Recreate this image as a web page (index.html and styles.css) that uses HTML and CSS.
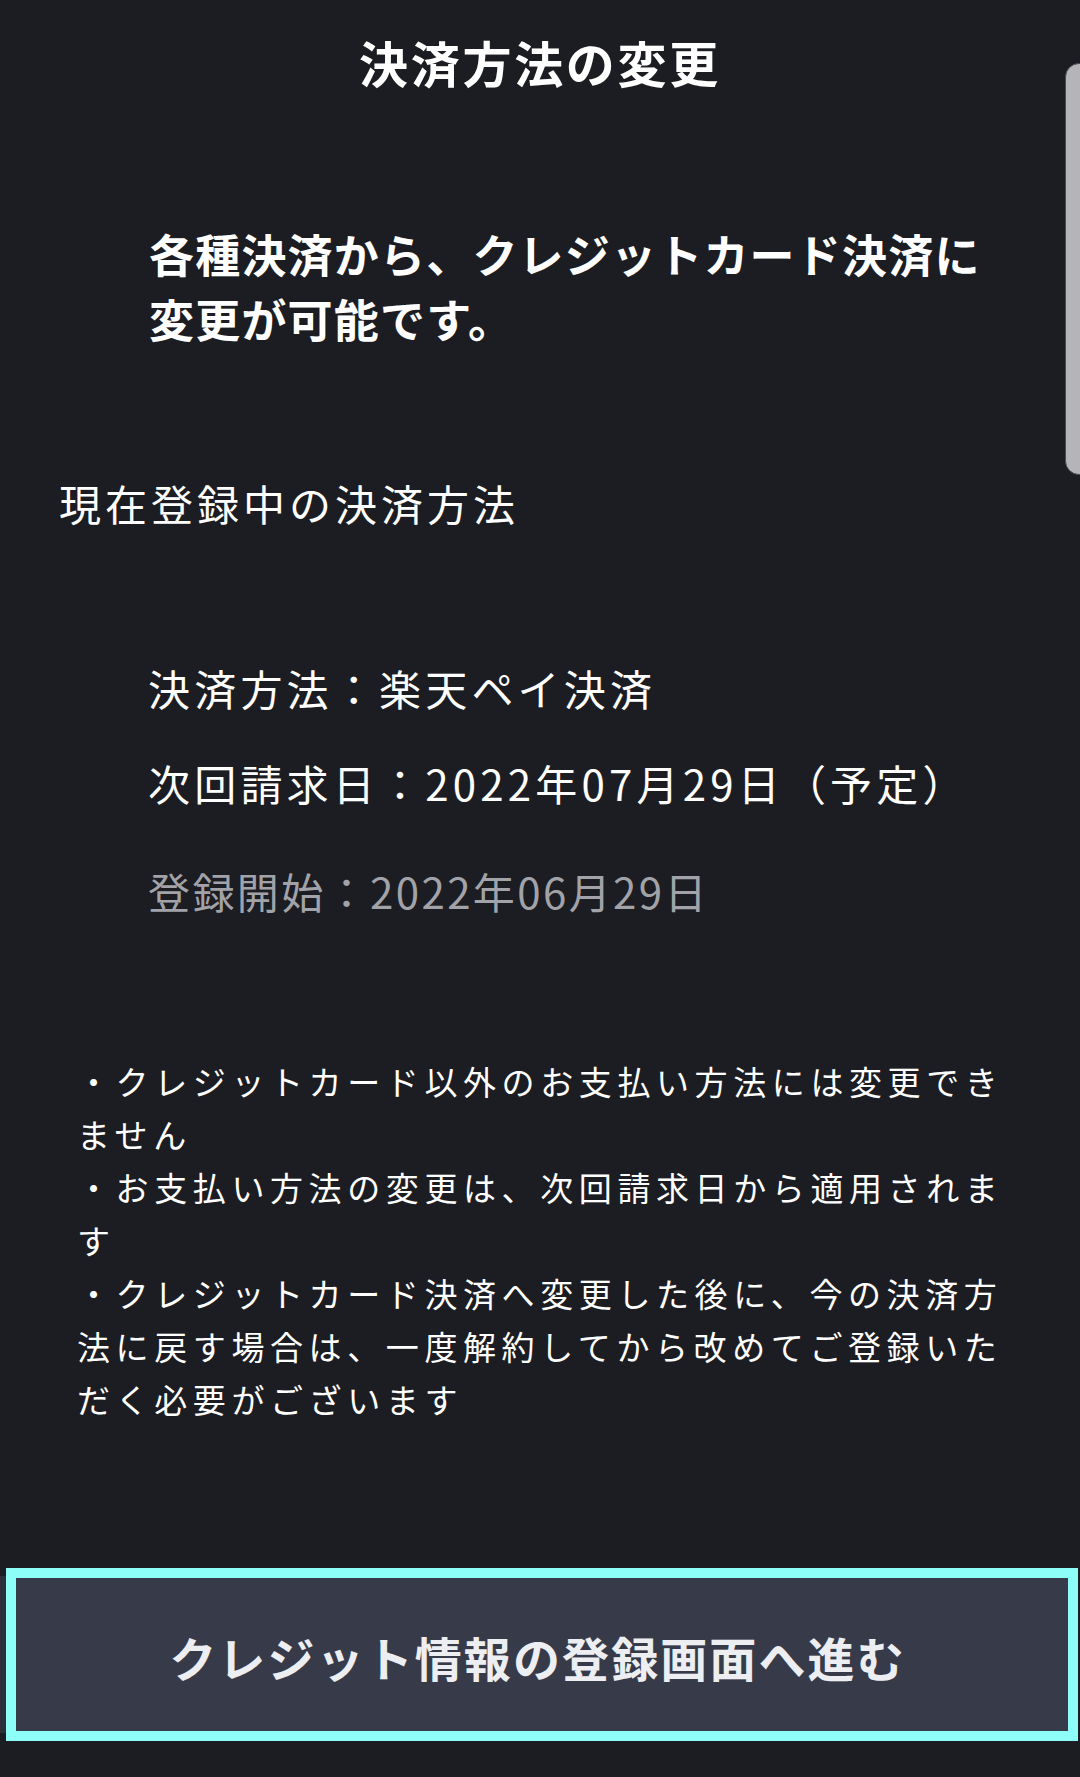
FILE: index.html
```html
<!DOCTYPE html>
<html lang="ja">
<head>
<meta charset="utf-8">
<title>決済方法の変更</title>
<link rel="stylesheet" href="styles.css">
</head>
<body>
<div class="screen">
  <header class="header">
    <h1 class="title">決済方法の変更</h1>
  </header>
  <main class="content">
    <p class="lead">各種決済から、クレジットカード決済に変更が可能です。</p>
    <h2 class="section-title">現在登録中の決済方法</h2>
    <dl class="info">
      <div class="info-row"><dt>決済方法：</dt><dd>楽天ペイ決済</dd></div>
      <div class="info-row"><dt>次回請求日：</dt><dd>2022年07月29日（予定）</dd></div>
      <div class="info-row muted"><dt>登録開始：</dt><dd>2022年06月29日</dd></div>
    </dl>
    <p class="notes">・クレジットカード以外のお支払い方法には変更できません<br>・お支払い方法の変更は、次回請求日から適用されます<br>・クレジットカード決済へ変更した後に、今の決済方法に戻す場合は、一度解約してから改めてご登録いただく必要がございます</p>
    <button class="cta" type="button">クレジット情報の登録画面へ進む</button>
  </main>
  <div class="scroll-thumb"></div>
</div>
</body>
</html>
```
FILE: styles.css
```css
html, body {
  margin: 0;
  padding: 0;
  background: #1c1d22;
}
body {
  font-family: "Noto Sans CJK JP", "Noto Sans", sans-serif;
  color: #ffffff;
  overflow: hidden;
}
.screen {
  position: relative;
  width: 1080px;
  height: 1777px;
}
.header {
  padding-top: 32px;
}
.title {
  margin: 0;
  font-size: 49px;
  font-weight: 700;
  line-height: 60px;
  letter-spacing: 2.7px;
  text-align: center;
}
.content {
  display: flex;
  flex-direction: column;
}
.lead {
  margin: 130px 0 0 0;
  padding-left: 149px;
  width: 860px;
  font-size: 45px;
  font-weight: 700;
  line-height: 64.5px;
  letter-spacing: 1.2px;
}
.section-title {
  margin: 124px 0 0 0;
  padding-left: 59px;
  font-size: 42px;
  font-weight: 400;
  line-height: 56px;
  letter-spacing: 4px;
}
.info {
  margin: 129px 0 0 0;
  padding-left: 148px;
  display: flex;
  flex-direction: column;
  gap: 39px;
}
.info-row {
  display: flex;
  font-size: 42px;
  line-height: 56px;
  letter-spacing: 4.2px;
}
.info-row dt, .info-row dd {
  margin: 0;
}
.info-row.muted {
  margin-top: 13px;
  color: #a2a3a8;
  letter-spacing: 2.4px;
}
.notes {
  margin: 136px 0 0 0;
  padding-left: 77px;
  width: 945px;
  font-size: 33px;
  line-height: 53px;
  letter-spacing: 5.6px;
}
.cta {
  margin: 142px 2px 0 6px;
  height: 173px;
  border: 10px solid #8efff8;
  background: #373b49;
  color: #eceef2;
  font-family: inherit;
  font-size: 47px;
  font-weight: 700;
  letter-spacing: 2.1px;
  padding: 4px 9px 0 0;
  box-shadow: -14px 0 0 -8px #2c2f38;
}
.scroll-thumb {
  position: absolute;
  left: 1065px;
  top: 63px;
  width: 30px;
  height: 412px;
  background: #b5b5b9;
  border: 1px solid #4a4b52;
  border-radius: 14px;
  box-sizing: border-box;
}
```
